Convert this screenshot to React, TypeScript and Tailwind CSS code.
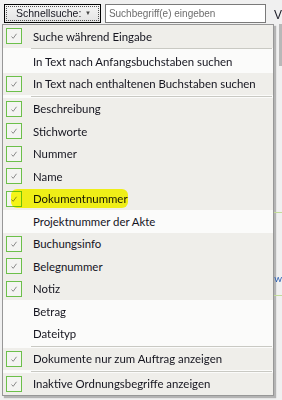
type Item = { label: string; checked: boolean; mark?: boolean } | 'sep';

const items: Item[] = [
    { label: 'Suche während Eingabe', checked: true },
    'sep',
    { label: 'In Text nach Anfangsbuchstaben suchen', checked: false },
    { label: 'In Text nach enthaltenen Buchstaben suchen', checked: true },
    'sep',
    { label: 'Beschreibung', checked: true },
    { label: 'Stichworte', checked: true },
    { label: 'Nummer', checked: true },
    { label: 'Name', checked: true },
    { label: 'Dokumentnummer', checked: true, mark: true },
    { label: 'Projektnummer der Akte', checked: false },
    { label: 'Buchungsinfo', checked: true },
    { label: 'Belegnummer', checked: true },
    { label: 'Notiz', checked: true },
    { label: 'Betrag', checked: false },
    { label: 'Dateityp', checked: false },
    'sep',
    { label: 'Dokumente nur zum Auftrag anzeigen', checked: true },
    'sep',
    { label: 'Inaktive Ordnungsbegriffe anzeigen', checked: true },
];

function CheckBox() {
    return (
        <div className="flex h-[16px] w-[16px] items-center justify-center border border-[#6cc04a] bg-[#f4f4f2]">
            <svg width="10" height="10" viewBox="0 0 10 10">
                <path d="M2.5 5.5 L4.2 7.3 L7.5 2.8" fill="none" stroke="#8a8a8a" strokeWidth="1" />
            </svg>
        </div>
    );
}

export default function App() {
    return (
        <div className="flex h-[400px] w-[282px] flex-col overflow-hidden bg-[#f0f0f0] font-['Segoe_UI','Lato',sans-serif] text-[11.4px] text-[#15151f]">
            {/* toolbar */}
            <div className="flex h-[24px] shrink-0 items-start pt-[4px] pl-[4px] font-['Liberation_Sans',sans-serif] text-[10.5px]">
                <div className="flex h-[19px] w-[98px] items-center border border-black bg-gradient-to-b from-[#f4f4f4] to-[#e4e4e4] p-[1px]">
                    <div className="flex h-full w-full items-center border border-dotted border-[#555] pl-[9px] pr-[7px]">
                        <span className="leading-none">Schnellsuche:</span>
                        <span className="ml-auto text-[6px] text-[#444]">▼</span>
                    </div>
                </div>
                <div className="ml-[4px] flex h-[19px] w-[163px] items-center border border-[#7a7a7a] bg-white pl-[3px] text-[10px] text-[#6d6d6d]">
                    Suchbegriff(e) eingeben
                </div>
                <span className="ml-[8px] mt-[2px] text-[12px] text-[#1b1b26]">V</span>
            </div>

            <div className="flex flex-1">
                {/* dropdown menu */}
                <div className="ml-[2px] h-[372px] w-[275px] border border-[#979797] bg-[#fbfbfa] shadow-[2px_2px_1px_rgba(0,0,0,0.25)]">
                    {items.map((it, i) =>
                        it === 'sep' ? (
                            <div key={i} className="flex h-[2.5px] items-center pl-[28px] pr-[1px]">
                                <div className="h-px w-full bg-[#c9c9c3]" />
                            </div>
                        ) : (
                            <div
                                key={i}
                                className={
                                    'relative flex h-[22.5px] items-center pr-[1px] ' +
                                    (it.checked ? 'bg-[#efeeea]' : 'bg-[#fbfbfa]')
                                }
                            >
                                <div className="flex w-[30px] shrink-0 pl-[3px]">
                                    {it.checked && <CheckBox />}
                                </div>
                                <span className="whitespace-nowrap">{it.label}</span>
                                {it.mark && (
                                    <div className="pointer-events-none absolute left-[8px] top-[1px] h-[19px] w-[117px] rounded-[6px] bg-[#ffff00] opacity-90 mix-blend-multiply blur-[0.6px]" />
                                )}
                            </div>
                        )
                    )}
                </div>

                {/* bits of the window behind */}
                <div className="flex flex-1 flex-col">
                    <div className="ml-auto h-[42px] w-[3px] bg-[#b8b8b8]" />
                    <div className="mt-[146px] h-px bg-[#c3dc9a]" />
                    <div className="mt-[60px] text-[10px] leading-none text-[#2a5db0]">w</div>
                    <div className="mt-[12px] h-px bg-[#c3dc9a]" />
                </div>
            </div>
        </div>
    );
}
